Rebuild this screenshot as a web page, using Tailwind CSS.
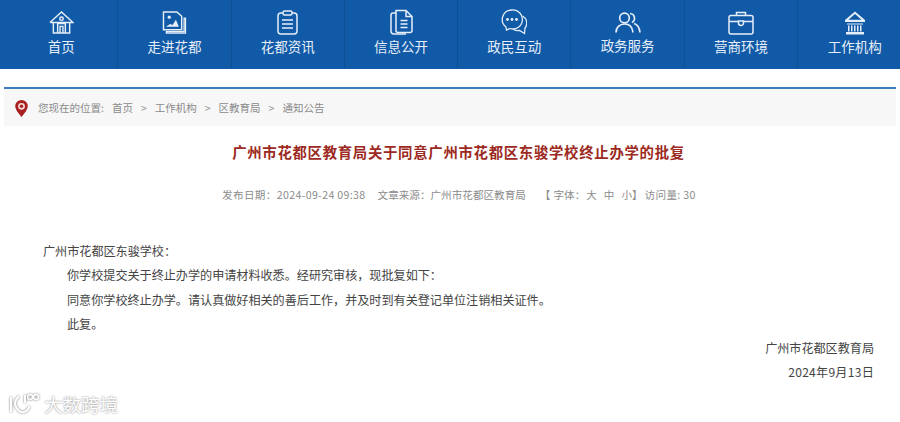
<!DOCTYPE html>
<html lang="zh-CN">
<head>
<meta charset="UTF-8">
<title>广州市花都区教育局</title>
<script src="https://cdn.jsdelivr.net/npm/@tailwindcss/browser@4"></script>
</head>
<body class="relative w-[900px] h-[422px] overflow-hidden bg-white font-['Noto_Sans_CJK_SC','Liberation_Sans',sans-serif]">
  <!-- Nav -->
  <nav class="flex h-[69px] pl-[5px] bg-[#115aa8] text-[#e6eef7] overflow-hidden">
    <a class="w-[113.3px] shrink-0 flex flex-col items-center border-r border-[#0e5098]">
      <svg class="mt-[10px] w-[25px] h-[25px]" viewBox="0 0 26 25" fill="none" stroke="currentColor" stroke-width="1.5"><path d="M1 12.500 13 1.500l12 11H1.500M4.500 12.500v11h17v-11"/><circle cx="13" cy="8.500" r="1.800"/><path d="M9 23.500v-10h8v10M11.500 23.500v-7h3v7"/></svg>
      <span class="mt-[1px] text-[13.5px] leading-[20px]">首页</span>
    </a>
    <a class="w-[113.3px] shrink-0 flex flex-col items-center border-r border-[#0e5098]">
      <svg class="mt-[11px] w-[25px] h-[23px]" viewBox="0 0 25 24" fill="none" stroke="currentColor" stroke-width="1.5"><path d="M20 19.500H1V1h14l5 4.500v14Z"/><path d="M22.500 7.500h1.500v15.500H4v-1.500h18.500Z" stroke-width="1.300"/><circle cx="7" cy="6.500" r="1.700" fill="currentColor" stroke="none"/><path d="M3.500 16.500 8 13.500l2.500 1 3.500-5.500 3 7.500H3.500Z" fill="currentColor" stroke="none"/></svg>
      <span class="mt-[2px] text-[13.5px] leading-[20px]">走进花都</span>
    </a>
    <a class="w-[113.3px] shrink-0 flex flex-col items-center border-r border-[#0e5098]">
      <svg class="mt-[10px] w-[21px] h-[25px]" viewBox="0 0 21 25" fill="none" stroke="currentColor" stroke-width="1.5"><rect x="1" y="3" width="19" height="21" rx="3"/><rect x="6" y="1" width="9" height="4" rx="1.500" fill="#115aa8"/><path d="M5 10h11M5 14h11M5 18h11"/></svg>
      <span class="mt-[1px] text-[13.5px] leading-[20px]">花都资讯</span>
    </a>
    <a class="w-[113.3px] shrink-0 flex flex-col items-center border-r border-[#0e5098]">
      <svg class="mt-[9px] w-[25px] h-[26px]" viewBox="0 0 25 26" fill="none" stroke="currentColor" stroke-width="1.5"><path d="M7 1.500h10l6 6v14a2 2 0 0 1-2 2H9a2 2 0 0 1-2-2v-20Z"/><path d="M17 1.500v6h6M11.500 11.500h7M11.500 15h7M11.500 18.500h7"/><path d="M7 4H4a2 2 0 0 0-2 2v16a3 3 0 0 0 3 3h12"/></svg>
      <span class="mt-[1px] text-[13.5px] leading-[20px]">信息公开</span>
    </a>
    <a class="w-[113.3px] shrink-0 flex flex-col items-center border-r border-[#0e5098]">
      <svg class="mt-[9px] w-[26px] h-[26px]" viewBox="0 0 26 26" fill="none" stroke="currentColor" stroke-width="1.3"><path d="M11 1a9.500 9.500 0 0 0-6 17l.5 3 3.500-1.500a9.500 9.500 0 1 0 2-18.500Z"/><circle cx="6.500" cy="10.500" r=".8" fill="currentColor"/><circle cx="11" cy="10.500" r=".8" fill="currentColor"/><circle cx="15.500" cy="10.500" r=".8" fill="currentColor"/><path d="M21.500 7a8 8 0 0 1 2.500 12l-.5 5.500-5-3a10 10 0 0 1-6-1"/></svg>
      <span class="mt-[1px] text-[13.5px] leading-[20px]">政民互动</span>
    </a>
    <a class="w-[113.3px] shrink-0 flex flex-col items-center border-r border-[#0e5098]">
      <svg class="mt-[12px] w-[26px] h-[21px]" viewBox="0 0 26 21" fill="none" stroke="currentColor" stroke-width="1.7"><circle cx="9.500" cy="6" r="4.800"/><path d="M1 20.500c0-5 3.500-8.500 8.500-8.500s8 3.500 8.500 8.500"/><path d="M15 1.500a4.800 4.800 0 0 1 2 9M19 11.500c3.500 1 5.500 4.500 6 9"/></svg>
      <span class="mt-[2px] text-[13.5px] leading-[20px]">政务服务</span>
    </a>
    <a class="w-[113.3px] shrink-0 flex flex-col items-center border-r border-[#0e5098]">
      <svg class="mt-[11px] w-[26px] h-[24px]" viewBox="0 0 26 24" fill="none" stroke="currentColor" stroke-width="1.5"><rect x="1" y="4.500" width="24" height="18.500" rx="2"/><path d="M8.500 4.500V1.500h9v3M1 10.500h9.500M15.500 10.500H25"/><path d="M10.500 10h5v2a2.500 2.500 0 0 1-5 0v-2Z"/></svg>
      <span class="mt-[1px] text-[13.5px] leading-[20px]">营商环境</span>
    </a>
    <a class="w-[113.3px] shrink-0 flex flex-col items-center">
      <svg class="mt-[11px] w-[22px] h-[24px]" viewBox="0 0 22 24" fill="currentColor"><path d="M11 .5 21 9v2H1V9L11 .5Zm0 2.500L4.500 8.800h13L11 3Z"/><path d="M3 12.500h16v1H3zM4 14.500h1.500v6H4zM7 14.500h1.500v6H7zM10 14.500h1.500v6H10zM13 14.500h1.500v6H13zM16 14.500h1.500v6H16zM2 21h18v2.500H2z"/></svg>
      <span class="mt-[1px] text-[13.5px] leading-[20px]">工作机构</span>
    </a>
  </nav>

  <!-- Breadcrumb -->
  <div class="mt-[18px] mx-[4px] h-[39px] pt-[1px] flex items-center border-t-2 border-[#3f7cbc] bg-[#f7f7f7] text-[10.5px] text-[#8a8a8a]">
    <svg class="ml-[11px] w-[13px] h-[17px]" viewBox="0 0 13 17"><path d="M6.500 0A6.300 6.300 0 0 0 .2 6.300c0 4 6.300 10.700 6.300 10.700s6.300-6.700 6.300-10.700A6.300 6.300 0 0 0 6.500 0Z" fill="#a8201f"/><circle cx="6.500" cy="6.300" r="3.400" fill="#f3dcdc"/><circle cx="6.500" cy="6.300" r="1.700" fill="#a8201f"/></svg>
    <span class="ml-[10px]">您现在的位置:</span>
    <span class="ml-[8px]">首页</span>
    <span class="ml-[8px]">&gt;</span>
    <span class="ml-[8px]">工作机构</span>
    <span class="ml-[8px]">&gt;</span>
    <span class="ml-[8px]">区教育局</span>
    <span class="ml-[8px]">&gt;</span>
    <span class="ml-[8px]">通知公告</span>
  </div>

  <!-- Article -->
  <h1 class="mt-[15px] pl-[17px] text-center text-[14.4px] tracking-[0.7px] leading-[22px] font-bold text-[#9c2a22]">广州市花都区教育局关于同意广州市花都区东骏学校终止办学的批复</h1>
  <div class="mt-[22px] flex pl-[222px] text-[10.6px] leading-[20px] text-[#8c8c8c]">
    <span class="tracking-[0.35px]">发布日期：2024-09-24 09:38</span>
    <span class="ml-[12px]">文章来源：广州市花都区教育局</span>
    <span class="ml-[14px]">【</span>
    <span class="ml-[3px]">字体：</span>
    <span class="ml-[1px]">大</span>
    <span class="ml-[7px]">中</span>
    <span class="ml-[7px]">小</span>
    <span>】</span>
    <span class="ml-[2px] tracking-[0.3px]">访问量: 30</span>
  </div>
  <div class="mt-[34px] pl-[43px] pr-[26px] text-[12.1px] leading-[24.3px] text-[#444]">
    <p>广州市花都区东骏学校：</p>
    <p class="pl-[24px]">你学校提交关于终止办学的申请材料收悉。经研究审核，现批复如下：</p>
    <p class="pl-[24px]">同意你学校终止办学。请认真做好相关的善后工作，并及时到有关登记单位注销相关证件。</p>
    <p class="pl-[24px]">此复。</p>
    <p class="text-right">广州市花都区教育局</p>
    <p class="text-right tracking-[0.25px]">2024年9月13日</p>
  </div>

  <!-- Watermark -->
  <div class="absolute left-[9px] top-[392px] flex items-center text-white [text-shadow:0_0_2px_#777]">
    <svg class="w-[31px] h-[24px] drop-shadow-[0_0_1px_#777]" viewBox="0 0 31 24" fill="none" stroke="#fff" stroke-width="2"><path d="M2 5v15M10 4c-3 3-4 6-4 8 1 5 5 9 9 8 3-1 5-3 5-6"/><path d="M16 3v8"/><circle cx="21" cy="5" r="2.500" stroke-width="1.500"/><circle cx="27" cy="5" r="2.500" stroke-width="1.500"/></svg>
    <span class="ml-[4px] text-[18.5px] leading-[24px]">大数跨境</span>
  </div>
</body>
</html>
